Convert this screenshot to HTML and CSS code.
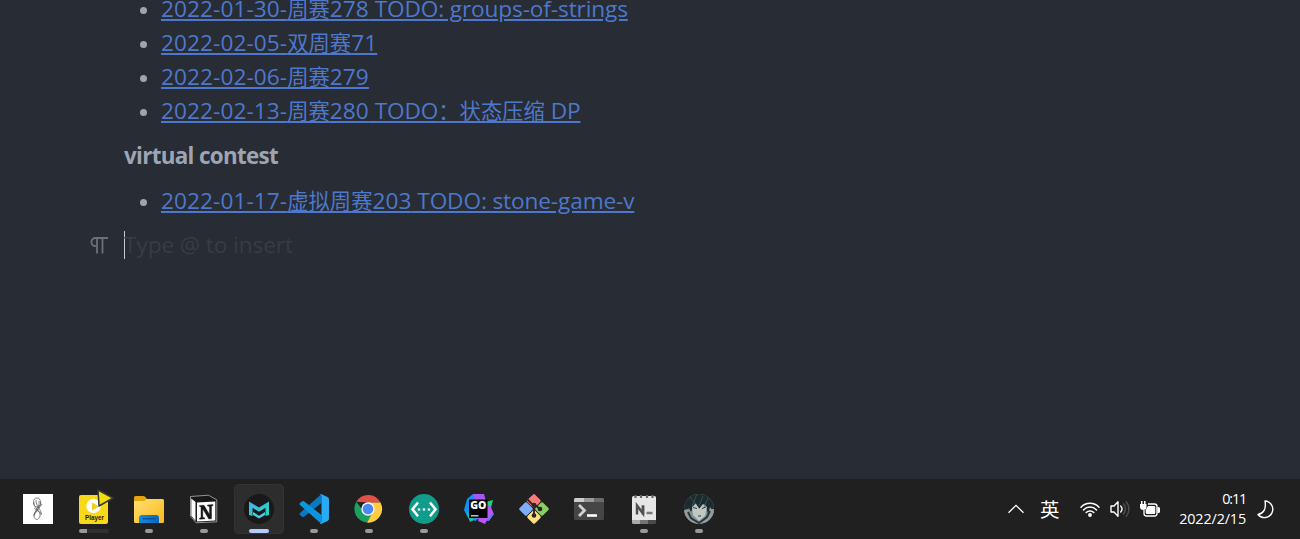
FILE: index.html
```html
<!DOCTYPE html>
<html lang="zh-CN">
<head>
<meta charset="utf-8">
<title>Notes</title>
<link rel="stylesheet" href="styles.css">
</head>
<body>
<main class="editor">
  <ul class="list">
    <li><a>2022-01-30-<span class="cjk">周赛</span>278<span class="tail"> TODO: groups-of-strings</span></a></li>
    <li><a>2022-02-05-<span class="cjk">双周赛</span>71</a></li>
    <li><a>2022-02-06-<span class="cjk">周赛</span>279</a></li>
    <li><a>2022-02-13-<span class="cjk">周赛</span>280<span class="tail"> TODO<span class="cjk">：状态压缩</span> DP</span></a></li>
  </ul>
  <h4 class="heading">virtual contest</h4>
  <ul class="list">
    <li><a>2022-01-17-<span class="cjk">虚拟周赛</span>203<span class="tail"> TODO: stone-game-v</span></a></li>
  </ul>
  <div class="prompt">
    <svg class="pilcrow" width="18" height="17" viewBox="0 0 18 17"><path d="M18 1H5.500a4 4 0 0 0 0 8.200H7M7 1v15.500M12.500 1v15.500" fill="none" stroke="#6b7079" stroke-width="1.800"/></svg>
    <span class="caret"></span><span class="placeholder">Type @ to insert</span>
  </div>
</main>
<footer class="taskbar">
  <div class="apps">
    <div class="app first">
      <svg class="icon" viewBox="0 0 30 30"><path fill="#fff" d="M0 0h30v30H0z"/><g fill="none" stroke="#555" stroke-width=".7"><ellipse cx="14" cy="8.500" rx="3.500" ry="4.500"/><path d="M11 8c-1 5 7 9 6 14-1 5-6 4-6 0 0-5 6-9 5-15M18 8c-1 7-7 9-7 14M13 6c0 8 6 9 5 15M19 10l-8 11M11 14l8 6"/></g></svg>
    </div>
    <div class="app">
      <svg class="icon" viewBox="0 0 30 30"><rect y="1" width="29" height="29" rx="2" fill="#f8d818"/><circle cx="14.500" cy="12" r="7.200" fill="#fff"/><path d="M13 8.500l7 4-7 4z" fill="#f2cf16"/><path d="M19-4l15 8-14 8z" fill="#f5dc0b" stroke="#333b36" stroke-width="1.500" stroke-linejoin="round"/><text x="15.500" y="26" text-anchor="middle" font-size="6.800" font-weight="700" textLength="19" lengthAdjust="spacingAndGlyphs" fill="#26220c" class="arial">Player</text></svg>
      <span class="progress"></span>
    </div>
    <div class="app">
      <svg class="icon" viewBox="0 0 30 30"><defs><linearGradient id="fold" x1="0" y1="0" x2="1" y2="1"><stop stop-color="#ffdf70"/><stop offset="1" stop-color="#fbb91e"/></linearGradient><linearGradient id="tray" x2="1"><stop stop-color="#168de0"/><stop offset="1" stop-color="#0866be"/></linearGradient></defs><path d="M0 3.500Q0 2 1.500 2h8Q11 2 13 5l2 2H0z" fill="#e5a50c"/><path d="M0 7h10l3-2h15.500Q30 5 30 6.500v21Q30 29 28.500 29h-27Q0 29 0 27.500z" fill="url(#fold)"/><path d="M5 29v-5q0-3 3-3h14q3 0 3 3v5z" fill="url(#tray)"/><path d="M8.500 24.800h13" stroke="#084e88" stroke-width="1.200"/></svg>
      <span class="dot"></span>
    </div>
    <div class="app">
      <svg class="icon" viewBox="0 0 30 30"><path d="M1.500 2.500l18-1.300 8.300 4.600v22L7 28.800 1.500 22z" fill="#181818" stroke="#c9c9c9" stroke-width=".7" stroke-linejoin="round"/><path d="M2.300 4.500L6.500 8v19l-4.200-5.500z" fill="#fff"/><path d="M8 8.500l18.300-1.100v19L8 27.500z" fill="#fff"/><path d="M10.500 11.500l4.500-.3 5.500 9.300v-8l-2-.5v-1l5.500-.4v1l-1.500.7v12.500l-2.700.2-6-10v8.300l2 .6v1l-5.300.3v-1l1.500-.8V13l-1.500-.6z" fill="#171717" stroke="#171717" stroke-width=".4"/></svg>
      <span class="dot"></span>
    </div>
    <div class="app active">
      <svg class="icon" viewBox="0 0 30 30"><circle cx="15" cy="15" r="15" fill="#191919"/><defs><linearGradient id="teal" x1="0" x2="1" y2="1"><stop stop-color="#42b2f1"/><stop offset="1" stop-color="#28d7bd"/></linearGradient></defs><path d="M5 7.500l10 6 10-6v13.500l-3.500 1v-8.200l-6.500 4-6.500-4V22L5 21z" fill="url(#teal)"/><path d="M9 18l6 3.700 6-3.700v3L15 24.500 9 21z" fill="#43d2e0"/></svg>
      <span class="dot wide"></span>
    </div>
    <div class="app">
      <svg class="icon" viewBox="0 0 30 30"><path d="M22.500 0L1 19q-1 1 0 2l2 1.700q1 .6 2 0L22.500 9z" fill="#0a78bf"/><path d="M22.500 30L1 11q-1-1 0-2l2-1.700q1-.6 2 0L22.500 21z" fill="#0c94df"/><path d="M22.500.2L28.500 3q1.500.8 1.500 2.500v19q0 1.700-1.500 2.500l-6 2.800q-1 .5-2-.5 2 .5 2-2V2.700q0-2.500-2-2 1-1 2-.5z" fill="#29aaf5"/></svg>
      <span class="dot"></span>
    </div>
    <div class="app">
      <svg class="icon" viewBox="0 0 30 30"><path d="M2.300 7.800A13.800 13.800 0 0 1 26.500 8.500H14z" fill="#df5147"/><path d="M2.300 7.800A13.800 13.800 0 0 0 13 28.600l6-10.400-9.500-1z" fill="#1ba15f"/><path d="M14 8.500h12.500A13.800 13.800 0 0 1 13 28.600l6.200-11z" fill="#fecd42"/><circle cx="14" cy="15" r="6.700" fill="#f3f3f3"/><circle cx="14" cy="15" r="5.300" fill="#4989f5"/></svg>
      <span class="dot"></span>
    </div>
    <div class="app">
      <svg class="icon" viewBox="0 0 30 30"><circle cx="15" cy="15" r="15" fill="#119b8b"/><path d="M9 8.500L3.500 15.300l5.500 7M21 8.500l5.500 6.800-5.500 7" fill="none" stroke="#fff" stroke-width="2.500"/><g fill="#fff"><circle cx="10" cy="15.500" r="1.300"/><circle cx="15" cy="15.500" r="1.300"/><circle cx="20" cy="15.500" r="1.300"/></g></svg>
      <span class="dot"></span>
    </div>
    <div class="app">
      <svg class="icon" viewBox="0 0 30 30"><path d="M9 0h10l3 9-10 18-8-3-4-8 3-11z" fill="#1591f0"/><path d="M9 0h11l2 7-10 4z" fill="#a955f5"/><path d="M18 9l11-3-2 8z" fill="#15d879"/><path d="M20 8l6 4 4 8-5 7-13-2z" fill="#617bf7"/><path d="M16 22l10-11 3 8-6 7-2 4-7-3z" fill="#bc55f3"/><path d="M2 17l8 9-4 2z" fill="#16c7a0"/><path d="M5 5.500h18.500V24H5z" fill="#050505"/><path d="M7 21.800h7.500" stroke="#ddd" stroke-width="1.300"/><text x="14.400" y="15" text-anchor="middle" font-size="10.500" font-weight="800" fill="#fff" class="sans">GO</text></svg>
    </div>
    <div class="app">
      <svg class="icon" viewBox="0 0 30 30"><g stroke-width="2.500" stroke-linejoin="round"><path d="M9 6.800l6-5.500 5.500 5.500-5.500 5.800z" fill="#fa7b7b" stroke="#fa7b7b"/><path d="M1.500 15L7 9.500l5.500 5.500L7 20.500z" fill="#7eadfb" stroke="#7eadfb"/><path d="M17.500 15L23 9.500l5.500 5.500-5.500 5.500z" fill="#88d061" stroke="#88d061"/><path d="M9.500 23l5.500-5.500 5.500 5.500-5.500 5.500z" fill="#fee083" stroke="#fee083"/></g><path d="M8.500 5.500L15 12v10M15 10l6 5" fill="none" stroke="#292522" stroke-width="1.800"/><circle cx="15" cy="11" r="2.300" fill="#292522"/><circle cx="21" cy="15" r="2.300" fill="#292522"/><circle cx="15" cy="21.500" r="2.300" fill="#292522"/></svg>
    </div>
    <div class="app">
      <svg class="icon" viewBox="0 0 30 30"><rect y="4" width="30" height="22" rx="1.500" fill="#464646"/><path d="M0 8V5.500Q0 4 1.500 4H10v4z" fill="#ccc"/><path d="M10 4h10v4H10z" fill="#999"/><path d="M20 4h8.500Q30 4 30 5.500V8H20z" fill="#6b6b6b"/><path d="M5 11l5.500 5.500-5.500 5.500" fill="none" stroke="#d2d2d2" stroke-width="2.800"/><path d="M13 21.500h10" stroke="#fff" stroke-width="2.600"/></svg>
    </div>
    <div class="app">
      <svg class="icon" viewBox="0 0 30 30"><rect x="3" y="2" width="24" height="25" rx="1.500" fill="#e6e6e6"/><path d="M3 26h8v4H4.500Q3 30 3 28.500z" fill="#aaa"/><path d="M11 26h8v4h-8z" fill="#747474"/><path d="M19 26h8v2.500q0 1.500-1.500 1.500H19z" fill="#4a4a4a"/><path d="M6.500 1v3M12 1v3M18 1v3M23.500 1v3" stroke="#666" stroke-width="2.200"/><path d="M8 20.500v-9l6 8v-8" fill="none" stroke="#505050" stroke-width="2.500"/><path d="M14 20.500v-9" stroke="#505050" stroke-width="2.500"/><path d="M17.500 19h6" stroke="#777" stroke-width="2.500"/></svg>
      <span class="dot"></span>
    </div>
    <div class="app">
      <svg class="icon" viewBox="0 0 30 30"><defs><clipPath id="round"><circle cx="15" cy="15" r="15"/></clipPath></defs><g clip-path="url(#round)"><path d="M0 0h30v30H0z" fill="#85908d"/><path d="M0 0h30v18l-4-5-2 7-3-10-5 5-5-6-4 9-2-4-5 8z" fill="#1c2b30"/><path d="M8 13l1 8 6 6 6-5 2-9-4-3-4 5-3-5z" fill="#c0c8c4"/><path d="M0 16l4-1 4 8 7 5 8-6 3-7h4v15H0z" fill="#919b97"/><path d="M4 18l3 6 8 5 8-6 3-6" fill="none" stroke="#263740" stroke-width="2"/><path d="M6 3l5 6M13 0l-5 12M19 2l-4 10M24 4l-4 9" stroke="#456060" stroke-width=".7"/><path d="M9 13.500l4 1M18 14.500l4-1.500M14 22h3" stroke="#39444a" stroke-width="1.100"/></g></svg>
      <span class="dot"></span>
    </div>
  </div>
  <div class="tray">
    <svg width="18" height="10" viewBox="0 0 18 10"><path d="M1.500 8.800L9 1.300l7.500 7.500" fill="none" stroke="#fff" stroke-width="1.300"/></svg>
    <span class="ime">英</span>
    <svg class="wifi" width="20" height="16" viewBox="0 0 20 16"><g fill="none" stroke="#fff" stroke-width="1.500" stroke-linecap="round"><path d="M1 6.200a12.500 12.500 0 0 1 18 0M3.500 8.900a9 9 0 0 1 13 0M6.200 11.500a5.400 5.400 0 0 1 7.600 0"/></g><circle cx="10" cy="14" r="1.900" fill="#fff"/></svg>
    <svg class="sound" width="20" height="18" viewBox="0 0 20 18"><g fill="none" stroke-width="1.400" stroke-linecap="round" stroke-linejoin="round"><path d="M13.500 4a7.500 7.500 0 0 1 0 10M16.200 1.700a11 11 0 0 1 0 14.600" stroke="#505050"/><path d="M1 6h3l4-4.200v14.400L4 12H1zM10.700 6a4.500 4.500 0 0 1 0 6" stroke="#fff"/></g></svg>
    <svg class="battery" width="20" height="17" viewBox="0 0 20 17"><path d="M8 3h6.500Q17 3 17 5.500v7q0 2.500-2.500 2.500h-8Q4 15 4 12.500V9" fill="none" stroke="#fff" stroke-width="1.300"/><path d="M8 5h6q1.300 0 1.300 1.300v5.400q0 1.300-1.300 1.300H7q-1.300 0-1.300-1.300V9zM17.500 6h1q1.500 0 1.500 1.500v3q0 1.500-1.500 1.500h-1zM0 3h6.500v3q0 3-3.300 3Q0 9 0 6zM1 0h1.500v3H1zM4 0h1.500v3H4z" fill="#fff"/></svg>
    <div class="clock"><span class="time">0:11</span><span class="date">2022/2/15</span></div>
    <svg class="moon" width="18" height="19" viewBox="0 0 18 19"><path d="M8 1a8.300 8.300 0 1 1-7 13.500C6.500 13.500 9.500 9 8 1z" fill="none" stroke="#fff" stroke-width="1.400" stroke-linejoin="round"/></svg>
  </div>
</footer>
</body>
</html>
```

FILE: styles.css
```css
* { box-sizing: border-box; }
body {
  margin: 0;
  height: 539px;
  overflow: hidden;
  display: flex;
  flex-direction: column;
  background: #282c34;
  font-family: "Open Sans", "Noto Sans CJK SC", sans-serif;
}
.editor {
  height: 479px;
  flex: none;
  padding-left: 124px;
  font-size: 22.67px;
  line-height: 34px;
  color: #9da5b4;
}
.list {
  margin: 0;
  padding: 0 0 0 37px;
  list-style: none;
}
.list:first-child { margin-top: -8px; }
.list li {
  height: 34px;
  display: flex;
  align-items: center;
  white-space: nowrap;
}
.list li::before {
  content: "";
  width: 7px;
  height: 7px;
  margin: 2px 14px 0 -21px;
  border-radius: 50%;
  background: #9da5b4;
}
.list a {
  color: #4d78cc;
  letter-spacing: 0.06px;
  text-decoration: underline;
  text-decoration-thickness: 2px;
  text-underline-offset: 2px;
}
.cjk {
  font-family: "Noto Sans CJK SC", sans-serif;
  font-size: 21.33px;
  font-weight: 400;
  line-height: 1;
  letter-spacing: 0;
}
.tail { letter-spacing: -0.14px; }
.heading {
  margin: 11px 0;
  font-size: 22.4px;
  font-weight: 700;
  line-height: 34px;
  letter-spacing: -0.68px;
}
.prompt {
  height: 34px;
  margin: 10px 0 0 -34px;
  display: flex;
  align-items: center;
}
.pilcrow { margin-right: 16px; }
.caret {
  width: 1px;
  height: 28px;
  background: #c3c8d1;
}
.placeholder {
  margin-left: -1px;
  color: #383c44;
  letter-spacing: -0.1px;
  white-space: nowrap;
}

.taskbar {
  height: 60px;
  flex: none;
  display: flex;
  justify-content: space-between;
  padding: 0 25px 0 8px;
  background: #202020;
  color: #fff;
}
.apps { display: flex; padding: 5px 0 0 2px; }
.app {
  width: 50px;
  height: 50px;
  margin: 0 2px 0 3px;
  padding-top: 10px;
  display: flex;
  flex-direction: column;
  align-items: center;
  border-radius: 5px;
}
.first { margin-right: 3px; }
.active { background: #2d2d2d; box-shadow: inset 0 0 0 1px #333; }
.icon { width: 30px; height: 30px; flex: none; overflow: visible; }
.sans { font-family: "Open Sans", sans-serif; }
.arial { font-family: "Liberation Sans", sans-serif; }
.dot {
  width: 8px;
  height: 4px;
  margin-top: 5px;
  border-radius: 2px;
  background: #999;
}
.wide { width: 20px; background: #b4cbfb; }
.progress {
  width: 30px;
  height: 4px;
  margin-top: 5px;
  border-radius: 2px;
  background: linear-gradient(to right, #999 8px, #303030 8px);
}
.tray { display: flex; align-items: center; }
.ime {
  width: 20px;
  margin: 0 20px 0 15px;
  font: 19.5px/24px "Noto Sans CJK SC", sans-serif;
}
.sound { margin-left: 10px; }
.battery { margin-left: 10px; }
.clock {
  width: 68px;
  margin: 0 11px 0 18px;
  display: flex;
  flex-direction: column;
  align-items: flex-end;
  font-size: 14.4px;
  line-height: 20px;
  white-space: nowrap;
}
.time { letter-spacing: -1.2px; }
.date { letter-spacing: -0.15px; }
```
